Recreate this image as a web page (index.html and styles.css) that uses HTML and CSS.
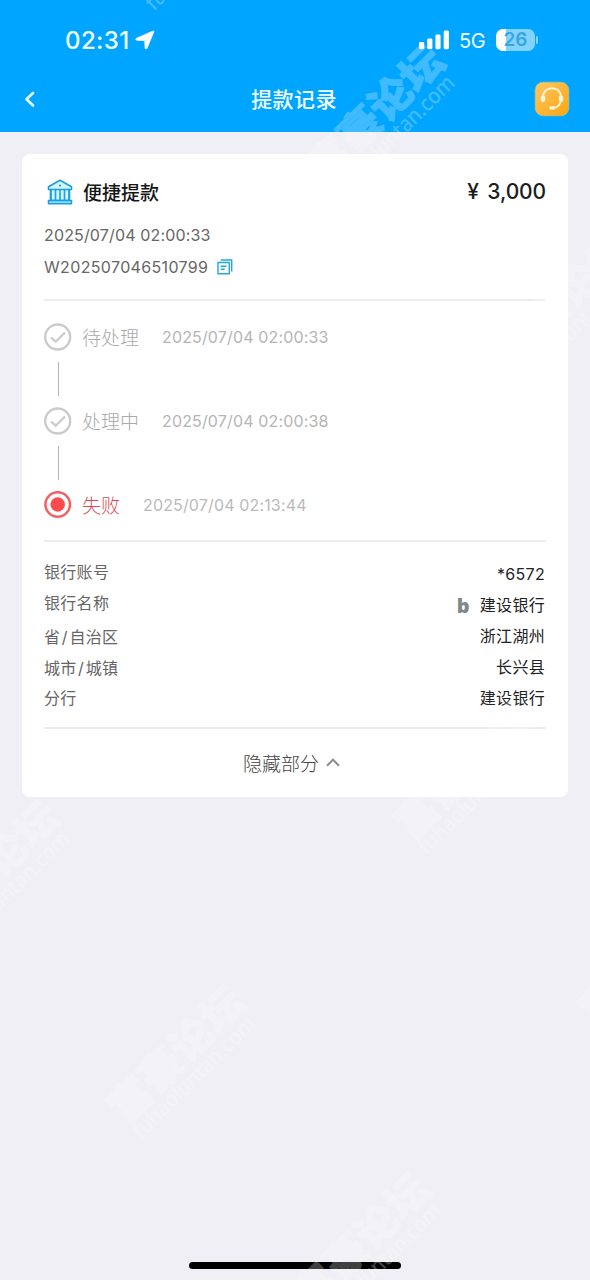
FILE: index.html
```html
<!DOCTYPE html>
<html lang="zh-CN">
<head>
<meta charset="utf-8">
<title>提款记录</title>
<link rel="stylesheet" href="styles.css">
</head>
<body>
<div class="screen">
  <header class="header">
    <div class="status">
      <div class="status-left">
        <span class="clock">02:31</span>
        <svg class="location" width="20" height="20" viewBox="0 0 20 20"><path d="M17.800 1.100C18.700.7 19.200 1.200 18.800 2.100L12 18.400C11.500 19.400 10.100 19.200 10 18L9.700 10.700 1.800 10.300C.6 10.200.3 8.800 1.500 8.200Z" fill="#fff" stroke="#fff" stroke-width=".6"/></svg>
      </div>
      <div class="status-right">
        <svg width="31" height="20" viewBox="0 0 31 20" fill="#fff"><rect x="0" y="12" width="5.200" height="7.200" rx="1.400"/><rect x="8.200" y="8.500" width="5.200" height="10.700" rx="1.400"/><rect x="16.400" y="4.500" width="5.200" height="14.700" rx="1.400"/><rect x="24.700" y="0.500" width="5.200" height="18.700" rx="1.400"/></svg>
        <span class="network">5G</span>
        <div class="battery"><span class="battery-body">26</span><i class="battery-cap"></i></div>
      </div>
    </div>
    <nav class="nav">
      <svg class="back" width="12" height="18" viewBox="0 0 12 18"><path d="M10 3 3.500 9.300 10 15.500" fill="none" stroke="#e4fdff" stroke-width="2.700" stroke-linecap="round" stroke-linejoin="round"/></svg>
      <h1 class="title">提款记录</h1>
      <svg class="service" width="36" height="36" viewBox="0 0 36 36">
        <defs><linearGradient id="gold" x1="0" y1="0" x2="1" y2="1"><stop offset="0" stop-color="#fdc765"/><stop offset="1" stop-color="#fda50c"/></linearGradient></defs>
        <rect x="1.200" y="1.200" width="33.600" height="33.600" rx="8" fill="url(#gold)" stroke="#b9c58d" stroke-width=".7"/>
        <path d="M9 16C9.300 10.500 13 7.300 18 7.300s8.700 3.200 9 8.700M27 18.500c-.5 4.500-3 7.800-7.300 8.300" fill="none" stroke="#fff6df" stroke-width="2" stroke-linecap="round"/>
        <rect x="6.800" y="14.500" width="4.300" height="6.500" rx="2.100" fill="#fff6df"/><rect x="24.900" y="14.500" width="4.300" height="6.500" rx="2.100" fill="#fff6df"/>
        <rect x="15.300" y="25.300" width="6" height="3.200" rx="1.600" fill="#fff6df"/>
      </svg>
    </nav>
  </header>

  <main class="card">
    <section class="summary">
      <div class="summary-head">
        <svg class="bank" width="28" height="28" viewBox="0 0 28 28" fill="none" stroke="#1aa0e0" stroke-width="1.600" stroke-linejoin="round">
          <path d="M2.500 8.800 14 2.300l11.500 6.500v2.700h-23zM4.500 11.500h19v11h-19z" fill="#d2f5ff"/>
          <path d="M2.500 22.500h23v3.200h-23z" fill="#8bdcf8"/>
          <path d="M5 11.500v11M9.500 11.500v11M14 11.500v11M18.500 11.500v11M23 11.500v11"/>
          <circle cx="14" cy="7.600" r=".5" stroke-width="1.200"/>
        </svg>
        <h2 class="method">便捷提款</h2>
        <span class="amount">¥ 3,000</span>
      </div>
      <div class="created">2025/07/04 02:00:33</div>
      <div class="order"><span class="order-no">W202507046510799</span>
        <svg width="16" height="16" viewBox="0 0 16 16" fill="none" stroke="#22a9dc" stroke-width="1.400"><path d="M3.700 1h11v11.500"/><path d="M1 3.500h11.300v11.300H1z"/><path d="M3.700 7.300h5.800M3.700 10.300h4"/></svg>
      </div>
    </section>

    <section class="timeline">
      <div class="step">
        <svg class="mark" width="28" height="28" viewBox="0 0 28 28" fill="none" stroke="#cbcbcb" stroke-width="2.300"><circle cx="13.700" cy="14" r="12.500"/><path d="m7 14.500 4.700 4.200 9.300-9.200"/></svg>
        <span class="state">待处理</span><time class="time">2025/07/04 02:00:33</time>
      </div>
      <div class="connector"></div>
      <div class="step">
        <svg class="mark" width="28" height="28" viewBox="0 0 28 28" fill="none" stroke="#cbcbcb" stroke-width="2.300"><circle cx="13.700" cy="14" r="12.500"/><path d="m7 14.500 4.700 4.200 9.300-9.200"/></svg>
        <span class="state">处理中</span><time class="time">2025/07/04 02:00:38</time>
      </div>
      <div class="connector"></div>
      <div class="step failed">
        <svg class="mark" width="28" height="28" viewBox="0 0 28 28"><circle cx="13.700" cy="13.500" r="12.300" fill="none" stroke="#ef6266" stroke-width="2.500"/><circle cx="13.700" cy="13.500" r="7.200" fill="#fb4a4d"/></svg>
        <span class="state">失败</span><time class="time">2025/07/04 02:13:44</time>
      </div>
    </section>

    <section class="details">
      <dl class="labels"><dt>银行账号</dt><dt>银行名称</dt><dt class="region">省<span class="slash">/</span>自治区</dt><dt>城市<span class="slash">/</span>城镇</dt><dt class="branch">分行</dt></dl>
      <dl class="values"><dd class="account">*6572</dd><dd class="bank-name"><b class="bank-logo">b</b>建设银行</dd><dd>浙江湖州</dd><dd>长兴县</dd><dd>建设银行</dd></dl>
    </section>

    <button class="toggle">隐藏部分<svg width="16" height="10" viewBox="0 0 16 10"><path d="M2 8.700 8 2.700l6 6" fill="none" stroke="#8d8d8d" stroke-width="2"/></svg></button>
  </main>
  <div class="home-bar"></div>

  <svg class="watermark" width="590" height="1280" viewBox="0 0 590 1280">
    <defs><g id="wm"><g transform="translate(101 1099) rotate(-44.5)"><text class="wm-name" x="-1" y="36" textLength="172" lengthAdjust="spacingAndGlyphs">富豪论坛</text><text class="wm-domain" x="0" y="57" textLength="163" lengthAdjust="spacingAndGlyphs">fuhaoluntan.com</text></g></g></defs>
    <use href="#wm"/><use href="#wm" x="185" y="187"/><use href="#wm" x="-186" y="-185"/><use href="#wm" x="286" y="-284"/><use href="#wm" x="471" y="-98"/><use href="#wm" x="386" y="-755"/><use href="#wm" x="199" y="-941"/><use href="#wm" x="13" y="-1128"/>
  </svg>
</div>
</body>
</html>
```
FILE: styles.css
```css
* { box-sizing: border-box; }
body { margin: 0; background: #f0eff5; font-family: Inter, "Noto Sans CJK SC", sans-serif; }
h1, h2, dl, dd { margin: 0; }
svg { display: block; flex: none; }
.screen { position: relative; width: 590px; height: 1280px; overflow: hidden; display: flex; flex-direction: column; }
.header { height: 132px; background: #00a5ff; color: #f2ffff; padding-top: 20px; }
.status { height: 40px; padding: 0 52px 0 65px; display: flex; justify-content: space-between; align-items: center; }
.status-left, .status-right { display: flex; align-items: center; }
.clock { font-size: 24px; font-weight: 500; width: 65px; white-space: nowrap; letter-spacing: .4px; }
.location { margin-left: 5px; }
.network { font-size: 20px; margin: 2px 10px 0 9px; width: 27px; letter-spacing: -.3px; }
.battery { display: flex; align-items: center; gap: 1px; }
.battery-body { width: 39px; height: 22px; border-radius: 7px; background: linear-gradient(90deg, #fff 10px, #83d3ff 10px); color: #36a6df; font-size: 19px; font-weight: 600; line-height: 22px; text-align: center; }
.battery-cap { width: 2px; height: 8px; border-radius: 0 3px 3px 0; background: #83d3ff; }
.nav { height: 78px; padding: 0 20px 0 23px; display: grid; grid-template-columns: 36px 1fr 36px; align-items: center; }
.title { font-size: 21px; font-weight: 500; line-height: 30px; text-align: center; padding: 1px 5px 0 0; letter-spacing: .4px; }
.card { width: 546px; height: 643px; margin: 22px 22px 0; padding: 0 22px; border-radius: 8px; background: #fff; }
.summary { height: 147px; padding-top: 20px; border-bottom: 2px solid #ececee; }
.summary-head { display: flex; align-items: center; height: 36px; padding-left: 2px; }
.method { margin: -1px 0 0 9px; font-size: 19px; font-weight: 500; color: #161616; }
.amount { margin: -2px 0 0 auto; font-size: 21px; font-weight: 500; color: #1c1c1c; letter-spacing: -.1px; word-spacing: 3px; }
.created { margin-top: 9px; font-size: 16px; line-height: 32px; color: #666; letter-spacing: .15px; }
.order { display: flex; align-items: center; gap: 9px; height: 32px; font-size: 16px; color: #666; letter-spacing: .35px; }
.timeline { height: 241px; padding-top: 22px; border-bottom: 2px solid #ececee; }
.step { height: 28px; display: flex; align-items: center; color: #b5b5b5; }
.state { margin: 3px 23px 0 10px; font-size: 19px; line-height: 28px; font-weight: 300; color: #aaa; }
.time { font-size: 16px; letter-spacing: .15px; }
.failed .state { color: #dc4d51; }
.connector { width: 1px; height: 34px; margin: 11px 0 11px 14px; background: #b2b2b2; }
.failed .time { color: #bababa; letter-spacing: .15px; }
.details { height: 187px; padding-top: 15px; border-bottom: 2px solid #ececee; display: flex; justify-content: space-between; font-size: 16px; line-height: 31px; letter-spacing: .3px; }
.labels { color: #666; }
.labels .region { margin-top: 3px; }
.labels .branch { line-height: 28px; }
.slash { margin: 0 1.500px; }
.values { color: #222; text-align: right; padding: 2px 1px 0 0; }
.bank-name { display: flex; justify-content: flex-end; }
.bank-logo { margin-right: 10px; color: #808888; font-family: "Noto Sans", sans-serif; font-size: 20px; font-weight: 900; }
.toggle { width: 100%; height: 68px; border: 0; padding: 0 6px 2px 0; background: none; display: flex; justify-content: center; align-items: center; gap: 6px; font: 300 19px "Noto Sans CJK SC", sans-serif; color: #444; }
.home-bar { width: 212px; height: 7px; margin: auto 0 11px 189px; border-radius: 4px; background: #000; }
.watermark { position: absolute; inset: 0; fill: #fff; opacity: .25; pointer-events: none; }
.wm-name { font: 900 41px "Noto Sans CJK SC", sans-serif; stroke: #fff; stroke-width: .8px; }
.wm-domain { font: 500 22px "Noto Sans", sans-serif; }
```
